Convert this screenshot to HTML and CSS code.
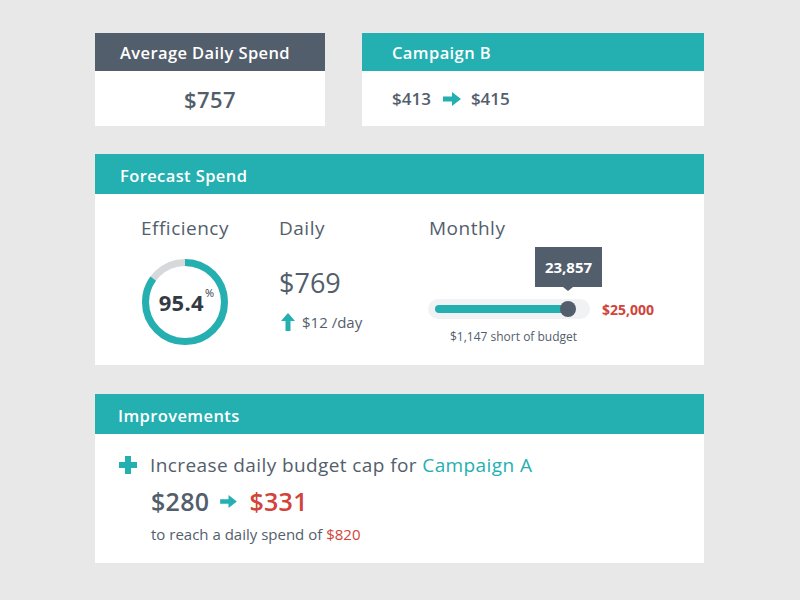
FILE: index.html
```html
<!DOCTYPE html>
<html>
<head>
<meta charset="utf-8">
<link rel="stylesheet" href="styles.css">
</head>
<body>
<div class="page">
  <div class="row-top">
    <section class="card card-avg">
      <header class="card-head head-dark">Average Daily Spend</header>
      <div class="card-body body-center"><span class="big-val">$757</span></div>
    </section>
    <section class="card card-camp">
      <header class="card-head head-teal head-wide">Campaign B</header>
      <div class="card-body body-left">
        <span class="mid-val">$413</span>
        <svg class="arrow-r" width="18" height="14" viewBox="0 0 18 14"><path d="M0 4.5h9V0l9 7-9 7V9.5H0z" fill="#24afb1"/></svg>
        <span class="mid-val">$415</span>
      </div>
    </section>
  </div>

  <section class="card card-forecast">
    <header class="card-head head-teal head-tall">Forecast Spend</header>
    <div class="forecast-body">
      <div class="col col-eff">
        <div class="col-label">Efficiency</div>
        <div class="donut">
          <svg width="88" height="88" viewBox="0 0 88 88">
            <circle cx="44" cy="44" r="39.5" fill="none" stroke="#d6d8dc" stroke-width="7"/>
            <circle cx="44" cy="44" r="39.5" fill="none" stroke="#24afb1" stroke-width="7" stroke-dasharray="210.9 248.2" transform="rotate(-90 44 44)"/>
          </svg>
          <div class="donut-text">95.4<sup>%</sup></div>
        </div>
      </div>
      <div class="col col-daily">
        <div class="col-label">Daily</div>
        <div class="daily-val">$769</div>
        <div class="daily-delta">
          <svg width="14" height="18" viewBox="0 0 14 18"><path d="M7 0l7 8H9.5v10h-5V8H0z" fill="#24afb1"/></svg>
          <span>$12 /day</span>
        </div>
      </div>
      <div class="col col-month">
        <div class="col-label">Monthly</div>
        <div class="slider-row">
          <div class="slider">
            <div class="tooltip">23,857</div>
            <div class="slider-fill"></div>
            <div class="slider-knob"></div>
          </div>
          <span class="budget">$25,000</span>
        </div>
        <div class="short">$1,147 short of budget</div>
      </div>
    </div>
  </section>

  <section class="card card-improve">
    <header class="card-head head-teal head-tall head-imp">Improvements</header>
    <div class="improve-body">
      <div class="imp-line">
        <svg class="plus" width="18" height="18" viewBox="0 0 18 18"><path d="M6 0h6v6h6v6h-6v6H6v-6H0V6h6z" fill="#24afb1"/></svg>
        <span class="imp-text">Increase daily budget cap for <span class="teal">Campaign A</span></span>
      </div>
      <div class="imp-vals">
        <span class="old">$280</span>
        <svg class="arrow-r2" width="17" height="13" viewBox="0 0 18 14"><path d="M0 4.5h9V0l9 7-9 7V9.5H0z" fill="#24afb1"/></svg>
        <span class="new">$331</span>
      </div>
      <div class="imp-note">to reach a daily spend of <span class="red">$820</span></div>
    </div>
  </section>
</div>
</body>
</html>
```

FILE: styles.css
```css
* { box-sizing: border-box; }
html, body { margin: 0; padding: 0; }
body {
  background: #e8e8e8;
  font-family: "Open Sans", "Lato", sans-serif;
  color: #535e6c;
  width: 800px;
  height: 600px;
  overflow: hidden;
}
.page {
  width: 609px;
  margin: 33px 0 0 95px;
  display: flex;
  flex-direction: column;
}
.row-top {
  display: flex;
  gap: 37px;
}
.card { background: #fff; }
.card-avg { width: 230px; }
.card-camp { width: 342px; }
.card-head {
  height: 38px;
  display: flex;
  align-items: center;
  padding-left: 25px;
  color: #fff;
  font-weight: 600;
  font-size: 16.5px;
  letter-spacing: 0.4px;
  padding-top: 1px;
}
.head-dark { background: #535e6c; }
.head-teal { background: #24afb1; }
.head-wide { padding-left: 30px; }
.head-tall { height: 40px; padding-top: 3px; }
.card-body {
  height: 55px;
  display: flex;
  align-items: center;
}
.body-center { justify-content: center; }
.body-left { padding-left: 30px; }
.big-val { font-size: 22px; font-weight: 600; letter-spacing: 0.4px; }
.mid-val { font-size: 17px; font-weight: 600; }
.arrow-r { margin: 0 10px 0 12px; }

.card-forecast { margin-top: 28px; }
.forecast-body {
  height: 171px;
  display: flex;
  padding: 22px 0 0 40px;
}
.col-label { font-size: 19px; line-height: 24px; letter-spacing: 0.5px; }
.col-eff {
  width: 100px;
  display: flex;
  flex-direction: column;
  align-items: center;
}
.donut {
  position: relative;
  width: 88px;
  height: 88px;
  margin-top: 18px;
}
.donut svg { display: block; }
.donut-text {
  position: absolute;
  inset: 0;
  display: flex;
  align-items: center;
  justify-content: center;
  font-size: 22px;
  font-weight: 700;
  color: #333a44;
  padding-left: 3px;
  letter-spacing: 0.3px;
}
.donut-text sup { font-size: 11px; font-weight: 400; align-self: flex-start; margin-top: 27px; margin-left: 1px; }
.col-daily { margin-left: 44px; width: 150px; }
.daily-val { font-size: 27px; line-height: 32px; margin-top: 27px; }
.daily-delta {
  display: flex;
  align-items: center;
  gap: 7px;
  margin-top: 13px;
  font-size: 15px;
}
.daily-delta svg { margin-left: 2px; }
.slider-row {
  display: flex;
  align-items: center;
  margin-top: 59px;
}
.slider {
  position: relative;
  width: 162px;
  height: 20px;
  border-radius: 10px;
  background: #f1f2f3;
  margin-left: -1px;
}
.slider-fill {
  position: absolute;
  left: 7px;
  top: 6px;
  width: 135px;
  height: 8px;
  border-radius: 4px;
  background: #24afb1;
}
.slider-knob {
  position: absolute;
  left: 132px;
  top: 2px;
  width: 16px;
  height: 16px;
  border-radius: 50%;
  background: #535e6c;
}
.tooltip {
  position: absolute;
  left: 107px;
  top: -52px;
  width: 67px;
  height: 40px;
  background: #535e6c;
  color: #fff;
  font-weight: 700;
  font-size: 15px;
  display: flex;
  align-items: center;
  justify-content: center;
}
.tooltip::after {
  content: "";
  position: absolute;
  left: 28px;
  bottom: -4px;
  border-left: 5px solid transparent;
  border-right: 5px solid transparent;
  border-top: 4px solid #535e6c;
}
.budget {
  margin-left: 12px;
  color: #d0443a;
  font-weight: 700;
  font-size: 14px;
}
.short {
  font-size: 12px;
  margin-top: 9px;
  margin-left: 21px;
}

.card-improve { margin-top: 29px; }
.card-improve .card-head { padding-left: 23px; }
.improve-body {
  height: 129px;
  padding: 20px 0 0 24px;
}
.imp-line {
  display: flex;
  align-items: center;
  height: 22px;
}
.plus { margin-right: 13px; }
.imp-text { font-size: 19px; letter-spacing: 0.4px; }
.teal { color: #24afb1; }
.red { color: #d0443a; }
.imp-vals {
  display: flex;
  align-items: center;
  margin: 10px 0 0 32px;
  height: 30px;
}
.old { font-size: 25px; font-weight: 600; letter-spacing: 0.3px; }
.new { font-size: 25px; font-weight: 600; color: #d0443a; letter-spacing: 0.3px; }
.arrow-r2 { margin: 0 12px 0 11px; }
.imp-note { font-size: 15px; margin: 8px 0 0 32px; line-height: 20px; }
```
